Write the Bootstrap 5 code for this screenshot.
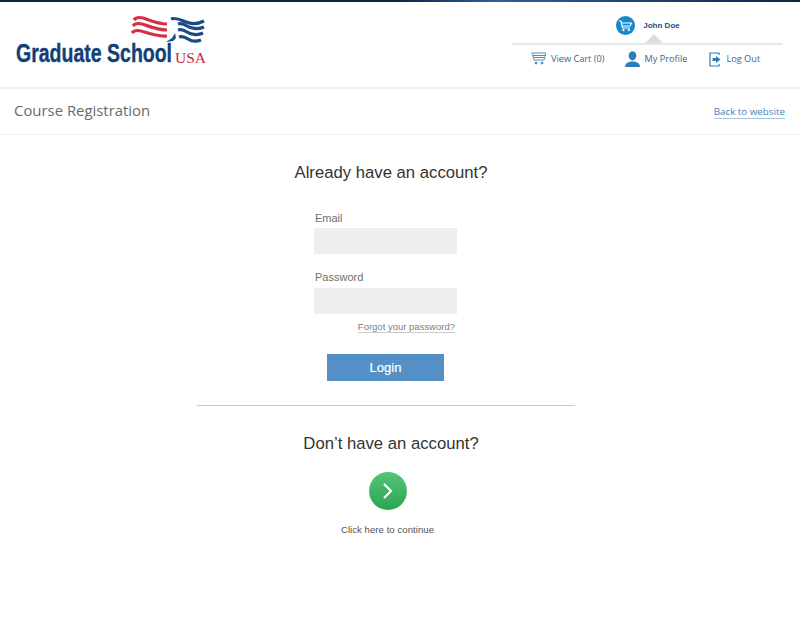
<!DOCTYPE html>
<html lang="en">
<head>
  <meta charset="UTF-8">
  <meta name="viewport" content="width=device-width, initial-scale=1.0">
  <title>Course Registration</title>
  <link href="https://cdn.jsdelivr.net/npm/bootstrap@5.3.0/dist/css/bootstrap.min.css" rel="stylesheet">
  <style>
    body { background: #fff; font-family: "Liberation Sans", Arial, sans-serif; color: #333; }
    .top-strip { height: 2px; background: linear-gradient(90deg, #0b2545 0, #0b2545 50%, #2f5f96 62%, #0b2545 100%); }
    .site-head { height: 87px; border-bottom: 2px solid #eee; padding: 0 17px 0 16px; }
    .logo-box { width: 192px; margin-top: 13px; }
    .logo-flag { display: block; margin-left: 115px; }
    .logo-line { margin-top: -9px; white-space: nowrap; line-height: 26px; height: 26px; display: flex; }
    .logo-name { display: inline-block; width: 155px; font-weight: 700; font-size: 26px; color: #123f79; transform: scaleX(.75); transform-origin: left center; -webkit-text-stroke: .4px #123f79; }
    .logo-usa { font-family: "Liberation Serif", serif; font-size: 15.5px; color: #c8283f; margin: 5px 0 0 4px; }
    .user-box { width: 271px; margin-top: 14px; }
    .user-row { height: 18px; margin-left: 1px; }
    .user-name { font-size: 8px; font-weight: 700; color: #1f4a80; padding-top: 1px; }
    .menu-row { border-top: 2px solid #e8e8e8; margin-top: 9px; padding: 6px 0 0 19px; position: relative; }
    .menu-arrow { position: absolute; left: 133px; top: -11px; border: 9px solid transparent; border-top: 0; border-bottom-color: #ddd; }
    .menu-link { font-family: "Open Sans", sans-serif; font-size: 9.2px; color: #3d6591; text-decoration: none; gap: 5px; }
    .menu-cart { margin-right: 21px; }
    .menu-profile { margin-right: 22px; gap: 4px; }
    .sub-head { height: 46px; border-bottom: 1px solid #eee; padding: 0 15px 0 14px; }
    .sub-title { font-family: "Open Sans", sans-serif; font-size: 14.9px; color: #6b6b6b; margin: 0 0 2px; font-weight: 400; }
    .back-link { font-family: "Open Sans", sans-serif; font-size: 9.8px; color: #4a80b5; text-decoration: none; border-bottom: 1px solid #a9c4df; line-height: 13px; }
    .login-wrap { width: 378px; margin-left: 197px; }
    .sec-title { font-size: 16.7px; font-weight: 400; color: #333; text-align: center; margin: 0; line-height: 22px; padding-left: 10px; }
    .sec-first { margin-top: 27px; }
    .login-form { width: 143px; margin: 27px 0 0 117px; }
    .field-label { font-size: 11px; color: #707070; line-height: 14px; margin: 0 0 3px 1px; display: block; }
    .field-input { display: block; width: 100%; height: 26px; background: #eee; border: 0; border-radius: 0; padding: 0 6px; }
    .field-gap { margin-bottom: 16px; }
    .field-gap + div .field-label { margin-bottom: 4px; }
    .forgot-row { margin: 5px 2px 23px 0; line-height: 12px; height: 12px; }
    .forgot-link { font-size: 9.5px; color: #808080; text-decoration: none; border-bottom: 1px solid #ccc; line-height: 11px; }
    .btn-login { background: #548fc5; color: #fff; border: 0; border-radius: 0; width: 117px; height: 27px; font-size: 13px; font-weight: 400; padding: 0; margin-left: 13px; display: block; -webkit-text-stroke: .2px #fff; }
    .btn-login:hover { background: #4a82b5; color: #fff; }
    .split-line { border-top: 1px solid #c9c9c9; margin: 24px 0 27px; }
    .go-box { padding-left: 3px; margin-top: 17px; }
    .go-btn { width: 38px; height: 38px; border-radius: 50%; background: linear-gradient(180deg, #55c476, #2ba552); }
    .go-note { font-size: 9.7px; color: #555; line-height: 13px; margin-top: 13px; }
  </style>
</head>
<body>
  <div class="top-strip"></div>

  <header class="site-head d-flex justify-content-between">
    <a class="logo-box d-block text-decoration-none" href="#">
      <svg class="logo-flag" width="76" height="34" viewBox="0 0 76 34">
        <g fill="none">
          <g stroke="#d42f45" stroke-width="3.200">
            <path d="M3 5c2-3 5-3 9-2s14 6 24 6"/>
            <path d="M2 11c2-3 5-3 9-2s15 6 25 6"/>
            <path d="M1 18c2-3 5-3 9-2s16 6 26 5"/>
          </g>
          <g stroke="#1c4a82" stroke-width="3.200">
            <path d="M40 4c5-2 10 1 15 3s12 2 18-1"/>
            <path d="M47 9c3-1 6 0 9 2s11 4 17 1"/>
            <path d="M47 15c3-1 6 0 9 2s10 4 16 1"/>
            <path d="M48 22c3-1 6 0 9 2s8 3 13 1"/>
          </g>
          <path d="M35 27l6-4 3-5 1 5-3 3z" fill="#1c4a82"/>
        </g>
      </svg>
      <div class="logo-line"><span class="logo-name">Graduate School</span><span class="logo-usa">USA</span></div>
    </a>

    <div class="user-box">
      <div class="user-row d-flex align-items-center justify-content-center gap-2">
        <svg width="19" height="19" viewBox="0 0 19 19">
          <circle cx="9.500" cy="9.500" r="9.500" fill="#1289c9"/>
          <path d="M3 5h2l1.500 7h7.500M5.500 7h10l-1.500 3H6.200" fill="none" stroke="#fff" stroke-width="1.200"/>
          <circle cx="7.500" cy="14.200" r="1.100" fill="#fff"/><circle cx="12.800" cy="14.200" r="1.100" fill="#fff"/>
        </svg>
        <span class="user-name">John Doe</span>
      </div>
      <nav class="menu-row d-flex align-items-center">
        <span class="menu-arrow"></span>
        <a class="menu-link menu-cart d-flex align-items-center" href="#">
          <svg width="15" height="13" viewBox="0 0 15 13" fill="none" stroke="#4a8fc0" stroke-width="1">
            <path d="M0 1h15l-2 7H3L1.500 2M2 3.500h12M3 5.500h10"/>
            <circle cx="5" cy="11" r="1" fill="#4a8fc0"/><circle cx="11" cy="11" r="1" fill="#4a8fc0"/>
          </svg>
          View Cart (0)
        </a>
        <a class="menu-link menu-profile d-flex align-items-center" href="#">
          <svg width="15" height="16" viewBox="0 0 15 16" fill="#2a7fb8">
            <ellipse cx="7.500" cy="4.800" rx="3.800" ry="4.600"/>
            <path d="M0 16c0-3.500 2.500-4.500 5.500-5.500h4c3 1 5.500 2 5.500 5.500z"/>
          </svg>
          My Profile
        </a>
        <a class="menu-link d-flex align-items-center" href="#">
          <svg width="12" height="15" viewBox="0 0 12 15">
            <path d="M10 3V1H1v13h9v-2" fill="none" stroke="#2a7fb8" stroke-width="1.200"/>
            <path d="M3.500 6h3.500V4l4.500 3.500L7 11V9H3.500z" fill="#2a7fb8"/>
          </svg>
          Log Out
        </a>
      </nav>
    </div>
  </header>

  <div class="sub-head d-flex justify-content-between align-items-center">
    <h1 class="sub-title">Course Registration</h1>
    <a class="back-link" href="#">Back to website</a>
  </div>

  <main class="login-wrap">
    <h2 class="sec-title sec-first">Already have an account?</h2>
    <form class="login-form">
      <div class="field-gap">
        <label class="field-label" for="email">Email</label>
        <input class="field-input" id="email" type="email">
      </div>
      <div>
        <label class="field-label" for="password">Password</label>
        <input class="field-input" id="password" type="password">
      </div>
      <div class="forgot-row text-end"><a class="forgot-link" href="#">Forgot your password?</a></div>
      <button class="btn btn-login" type="button">Login</button>
    </form>
    <div class="split-line"></div>
    <h2 class="sec-title">Don’t have an account?</h2>
    <div class="go-box d-flex flex-column align-items-center">
      <a class="go-btn d-flex align-items-center justify-content-center" href="#">
        <svg width="12" height="18" viewBox="0 0 12 18" fill="none" stroke="#fff" stroke-width="2.200"><path d="M2 2l7 7-7 7"/></svg>
      </a>
      <div class="go-note">Click here to continue</div>
    </div>
  </main>

  <script src="https://cdn.jsdelivr.net/npm/bootstrap@5.3.0/dist/js/bootstrap.bundle.min.js"></script>
</body>
</html>
